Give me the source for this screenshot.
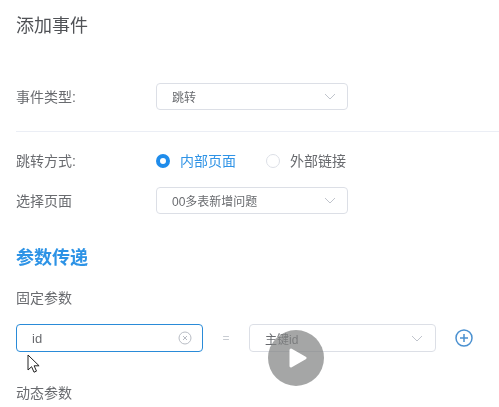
<div class="page">
  <h2 class="title">添加事件</h2>

  <div class="row type-row">
    <span class="label">事件类型:</span>
    <div class="select">
      <span>跳转</span>
      <svg class="arrow" width="12" height="7" viewBox="0 0 12 7"><path d="M1 1 6 6 11 1" /></svg>
    </div>
  </div>

  <div class="divider"></div>

  <div class="row mode-row">
    <span class="label">跳转方式:</span>
    <div class="radios">
      <span class="radio on"></span>
      <span class="radio-text active">内部页面</span>
      <span class="radio off"></span>
      <span class="radio-text">外部链接</span>
    </div>
  </div>

  <div class="row page-row">
    <span class="label">选择页面</span>
    <div class="select">
      <span>00多表新增问题</span>
      <svg class="arrow" width="12" height="7" viewBox="0 0 12 7"><path d="M1 1 6 6 11 1" /></svg>
    </div>
  </div>

  <h3 class="section">参数传递</h3>

  <div class="sub">固定参数</div>

  <div class="param-row">
    <div class="input">
      <span>id</span>
      <svg width="14" height="14" viewBox="0 0 14 14" class="clear">
        <circle cx="7" cy="7" r="6" />
        <path d="M5 5l4 4M9 5l-4 4" />
      </svg>
    </div>
    <span class="eq">=</span>
    <div class="select wide">
      <span>主键id</span>
      <svg class="arrow" width="12" height="7" viewBox="0 0 12 7"><path d="M1 1 6 6 11 1" /></svg>
    </div>
    <svg class="plus" width="18" height="18" viewBox="0 0 18 18">
      <circle cx="9" cy="9" r="8" />
      <path d="M5 9h8M9 5v8" />
    </svg>
  </div>

  <div class="sub dynamic">动态参数</div>
</div>

<svg class="cursor" width="14" height="20" viewBox="0 0 14 20">
  <path d="M1 1v15l3.600-3.300 2.400 5.500 2.500-1.100-2.400-5.300h5z" />
</svg>

<div class="play">
  <svg width="18" height="20" viewBox="0 0 18 20"><path d="M2 2 16 10 2 18z" /></svg>
</div>

<style>
  :global(body) {
    margin: 0;
    background: #fff;
    overflow: hidden;
  }

  .page {
    width: 499px;
    height: 407px;
    box-sizing: border-box;
    padding: 15px 0 0 16px;
    overflow: hidden;
    font-family: "Liberation Sans", "Noto Sans CJK SC", sans-serif;
    font-size: 14px;
    color: #696b6f;
    filter: blur(0.45px);
  }

  .title {
    margin: 0;
    font-size: 18px;
    font-weight: 400;
    line-height: 22px;
    color: #505256;
  }

  .row {
    display: flex;
    align-items: center;
  }

  .label {
    width: 140px;
    flex-shrink: 0;
    margin-bottom: 2px;
  }

  .type-row { margin-top: 46px; }
  .mode-row { margin-top: 15px; height: 28px; }
  .page-row { margin-top: 12px; }

  .select {
    display: flex;
    align-items: center;
    justify-content: space-between;
    box-sizing: border-box;
    width: 192px;
    height: 27px;
    padding: 0 11px 0 15px;
    border: 1px solid #dcdfe6;
    border-radius: 4px;
    font-size: 12px;
    color: #696b6f;
  }

  .select.wide {
    width: 187px;
    height: 28px;
    padding-right: 12px;
  }

  .arrow path {
    fill: none;
    stroke: #c0c4cc;
    stroke-width: 1;
  }

  .divider {
    height: 1px;
    margin-top: 21px;
    background: #ebeef5;
  }

  .radios {
    display: flex;
    align-items: center;
  }

  .radio {
    box-sizing: border-box;
    width: 14px;
    height: 14px;
    border-radius: 50%;
  }

  .radio.on {
    border: 4px solid #1f8ceb;
    background: #fff;
  }

  .radio.off {
    border: 1px solid #dcdfe6;
    margin-left: 30px;
  }

  .radio-text {
    margin: 0 0 2px 10px;
    font-size: 14px;
  }

  .radio-text.active { color: #2f93e6; }

  .section {
    margin: 31px 0 0;
    font-size: 18px;
    font-weight: 700;
    line-height: 26px;
    color: #2d93e6;
  }

  .sub {
    line-height: 20px;
  }

  .section + .sub { margin-top: 17px; }

  .param-row {
    display: flex;
    align-items: center;
    margin-top: 16px;
  }

  .input {
    display: flex;
    align-items: center;
    justify-content: space-between;
    box-sizing: border-box;
    width: 187px;
    height: 28px;
    padding: 0 10px 0 15px;
    border: 1px solid #2a8bd8;
    border-radius: 4px;
    font-size: 13px;
  }

  .clear circle,
  .clear path {
    fill: none;
    stroke: #b8bcc4;
  }

  .eq {
    width: 46px;
    text-align: center;
    font-size: 12px;
    color: #c8ccd2;
  }

  .plus {
    margin-left: 19px;
  }

  .plus circle,
  .plus path {
    fill: none;
    stroke: #4a90d0;
    stroke-width: 1.500;
  }

  .dynamic { margin-top: 31px; }

  .cursor {
    position: absolute;
    left: 27px;
    top: 354px;
  }

  .cursor path {
    fill: #fff;
    stroke: #222;
    stroke-width: 1;
  }

  .play {
    position: absolute;
    left: 268px;
    top: 330px;
    width: 56px;
    height: 56px;
    border-radius: 50%;
    background: rgba(130, 132, 132, 0.72);
    display: flex;
    align-items: center;
    justify-content: center;
  }

  .play svg {
    margin-left: 3px;
  }

  .play path {
    fill: #fff;
    stroke: #fff;
    stroke-width: 3;
    stroke-linejoin: round;
  }
</style>
